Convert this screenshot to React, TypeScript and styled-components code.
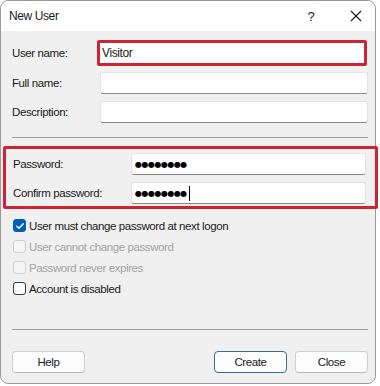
import React from "react";
import styled, { createGlobalStyle } from "styled-components";

const Global = createGlobalStyle`
  html, body { margin: 0; padding: 0; background: #ffffff; }
  body { font-family: "Liberation Sans", Arial, sans-serif; font-size: 11.5px; letter-spacing: -0.4px; color: #1a1a1a; }
  * { box-sizing: border-box; }
`;

const Window = styled.div`
  position: relative;
  width: 376px;
  height: 384px;
  border: 1px solid #9a9a9a;
  border-radius: 8px;
  background: #f0f0f0;
  overflow: visible;
  display: flex;
  flex-direction: column;
`;

const TitleBar = styled.div`
  height: 30px;
  background: #ffffff;
  border-radius: 8px 8px 0 0;
  display: flex;
  align-items: center;
  padding-left: 8px;
  padding-right: 7px;
  flex-shrink: 0;
`;

const Title = styled.div`
  flex: 1;
  font-size: 12px;
`;

const TitleButton = styled.div<{ $w: number }>`
  width: ${(p) => p.$w}px;
  display: flex;
  justify-content: center;
  align-items: center;
  font-size: 13px;
`;

const TitleGap = styled.div`
  width: 21px;
`;

const Body = styled.div`
  flex: 1;
  display: flex;
  flex-direction: column;
  padding: 9px 7px 0 11px;
`;

const Row = styled.div<{ $mt: number }>`
  display: flex;
  align-items: center;
  margin-top: ${(p) => p.$mt}px;
`;

const Label = styled.div<{ $w: number }>`
  width: ${(p) => p.$w}px;
  flex-shrink: 0;
`;

const Field = styled.div<{ $highlight?: boolean }>`
  flex: 1;
  height: ${(p) => (p.$highlight ? 26 : 22)}px;
  background: #ffffff;
  border: ${(p) => (p.$highlight ? "3px solid #cf2331" : "1px solid #e3e3e3")};
  border-bottom: ${(p) => (p.$highlight ? "3px solid #cf2331" : "1px solid #8a8a8a")};
  border-radius: ${(p) => (p.$highlight ? "2px" : "3px")};
  margin-left: ${(p) => (p.$highlight ? -3 : 0)}px;
  margin-right: ${(p) => (p.$highlight ? 1 : 0)}px;
  display: flex;
  align-items: center;
  padding-left: 2px;
  font-size: 12px;
`;

const Separator = styled.div<{ $mt: number }>`
  height: 1px;
  background: #a0a0a0;
  margin-top: ${(p) => p.$mt}px;
`;

const PasswordGroup = styled.div`
  margin: 8px -10px 0 -9px;
  border: 3px solid #cf2331;
  border-radius: 2px;
  padding: 4px 9px 2px 7px;
  display: flex;
  flex-direction: column;
`;

const Dots = styled.span`
  font-family: "DejaVu Sans", sans-serif;
  font-size: 8px;
  letter-spacing: -0.5px;
  padding-left: 1px;
  color: #000;
`;

const Caret = styled.span`
  display: inline-block;
  width: 1px;
  height: 15px;
  background: #000;
  margin-left: 2px;
`;

const CheckList = styled.div`
  display: flex;
  flex-direction: column;
  margin-top: 10px;
  gap: 8px;
`;

const CheckRow = styled.div<{ $disabled?: boolean }>`
  display: flex;
  align-items: center;
  height: 13px;
  color: ${(p) => (p.$disabled ? "#a3a3a3" : "#1a1a1a")};
`;

const Box = styled.div<{ $checked?: boolean; $disabled?: boolean }>`
  width: 13px;
  height: 13px;
  margin-left: 1px;
  margin-right: 3px;
  border-radius: 3px;
  border: 1px solid ${(p) => (p.$checked ? "#005fb8" : p.$disabled ? "#cfcfcf" : "#3a3a3a")};
  background: ${(p) => (p.$checked ? "#005fb8" : p.$disabled ? "#f5f5f5" : "#fbfbfb")};
  display: flex;
  align-items: center;
  justify-content: center;
  flex-shrink: 0;
`;

const Spacer = styled.div`
  flex: 1;
`;

const ButtonBar = styled.div`
  display: flex;
  align-items: center;
  margin-top: 21px;
  margin-bottom: 10px;
  gap: 8px;
`;

const Button = styled.div<{ $default?: boolean }>`
  width: 73px;
  height: 22px;
  border-radius: 4px;
  background: #fdfdfd;
  border: 1px solid ${(p) => (p.$default ? "#3d6f84" : "#d0d0d0")};
  border-bottom-color: ${(p) => (p.$default ? "#3d6f84" : "#b8b8b8")};
  display: flex;
  align-items: center;
  justify-content: center;
`;

const Check = () => (
  <svg width="10" height="10" viewBox="0 0 10 10">
    <path d="M1.8 5.2 L4 7.3 L8.3 2.8" fill="none" stroke="#fff" strokeWidth="1.4" strokeLinecap="round" strokeLinejoin="round" />
  </svg>
);

const CloseIcon = () => (
  <svg width="12" height="12" viewBox="0 0 12 12">
    <path d="M1 1 L11 11 M11 1 L1 11" stroke="#1a1a1a" strokeWidth="1.1" />
  </svg>
);

export default function App() {
  return (
    <>
      <Global />
      <Window>
        <TitleBar>
          <Title>New User</Title>
          <TitleButton $w={24}>?</TitleButton>
          <TitleGap />
          <TitleButton $w={24}>
            <CloseIcon />
          </TitleButton>
        </TitleBar>
        <Body>
          <Row $mt={0}>
            <Label $w={88}>User name:</Label>
            <Field $highlight>Visitor</Field>
          </Row>
          <Row $mt={6}>
            <Label $w={88}>Full name:</Label>
            <Field />
          </Row>
          <Row $mt={7}>
            <Label $w={88}>Description:</Label>
            <Field />
          </Row>
          <Separator $mt={14} />
          <PasswordGroup>
            <Row $mt={0}>
              <Label $w={118}>Password:</Label>
              <Field>
                <Dots>●●●●●●●●</Dots>
              </Field>
            </Row>
            <Row $mt={7}>
              <Label $w={118}>Confirm password:</Label>
              <Field>
                <Dots>●●●●●●●●</Dots>
                <Caret />
              </Field>
            </Row>
          </PasswordGroup>
          <CheckList>
            <CheckRow>
              <Box $checked>
                <Check />
              </Box>
              User must change password at next logon
            </CheckRow>
            <CheckRow $disabled>
              <Box $disabled />
              User cannot change password
            </CheckRow>
            <CheckRow $disabled>
              <Box $disabled />
              Password never expires
            </CheckRow>
            <CheckRow>
              <Box />
              Account is disabled
            </CheckRow>
          </CheckList>
          <Spacer />
          <Separator $mt={0} />
          <ButtonBar>
            <Button>Help</Button>
            <Spacer />
            <Button $default>Create</Button>
            <Button>Close</Button>
          </ButtonBar>
        </Body>
      </Window>
    </>
  );
}
